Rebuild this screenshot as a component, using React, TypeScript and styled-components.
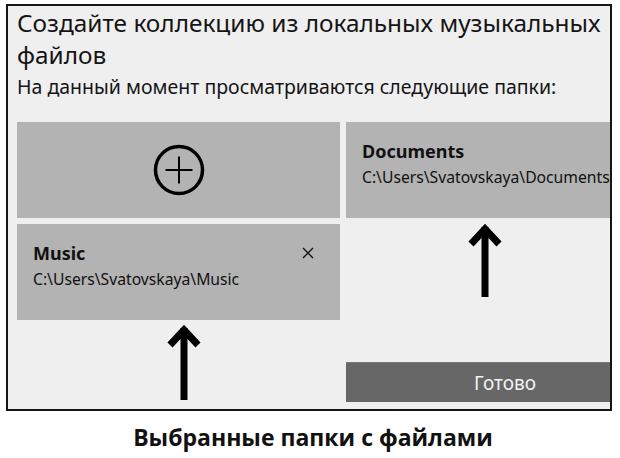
import * as React from "react";
import styled, { createGlobalStyle } from "styled-components";

const GlobalStyle = createGlobalStyle`
  html, body {
    margin: 0;
    padding: 0;
    background: #ffffff;
  }
  body {
    font-family: "Noto Sans", "Open Sans", sans-serif;
    color: #111;
  }
`;

const Page = styled.div`
  width: 620px;
  height: 458px;
  padding: 4px 0 0 6px;
  box-sizing: border-box;
`;

const Dialog = styled.div`
  position: relative;
  width: 606px;
  height: 407px;
  box-sizing: border-box;
  border: 2px solid #151515;
  background: #efefef;
  overflow: hidden;
  display: flex;
  flex-direction: column;
  padding: 1px 0 7px 9px;
`;

const Title = styled.h1`
  margin: 0;
  width: 594px;
  font-size: 24.4px;
  line-height: 32px;
  font-weight: 400;
  color: #151515;
`;

const Subtitle = styled.p`
  margin: 3.5px 0 0;
  font-size: 19.5px;
  line-height: 24px;
  color: #151515;
  white-space: nowrap;
`;

const Grid = styled.div`
  display: grid;
  grid-template-columns: 323px 290px;
  grid-auto-rows: 96px;
  gap: 6px;
  margin-top: 23.5px;
`;

const Tile = styled.div<{ $center?: boolean }>`
  background: #b3b3b3;
  box-sizing: border-box;
  padding: ${(p) => (p.$center ? "0" : "18px 16px 0")};
  display: flex;
  flex-direction: column;
  align-items: ${(p) => (p.$center ? "center" : "stretch")};
  justify-content: ${(p) => (p.$center ? "center" : "flex-start")};
`;

const TileHead = styled.div`
  display: flex;
  align-items: center;
  justify-content: space-between;
  padding-right: 9px;
`;

const FolderName = styled.div`
  font-size: 18px;
  line-height: 22px;
  font-weight: 700;
  color: #111;
`;

const FolderPath = styled.div`
  margin-top: 5px;
  font-size: 15.7px;
  line-height: 20px;
  color: #111;
  white-space: nowrap;
`;

const RemoveButton = styled.button`
  border: none;
  background: none;
  padding: 0;
  width: 14px;
  height: 14px;
  display: flex;
  align-items: center;
  justify-content: center;
  cursor: pointer;
`;

const Footer = styled.div`
  margin-top: auto;
  display: grid;
  grid-template-columns: 323px 290px;
  gap: 6px;
`;

const DoneButton = styled.button`
  grid-column: 2;
  height: 40px;
  border: none;
  border-top: 1px solid #7a7a7a;
  background: #676767;
  color: #f2f2f2;
  font-family: "Noto Sans", "Open Sans", sans-serif;
  font-size: 19px;
  padding: 0 0 0 28px;
  text-align: center;
`;

const Arrow = styled.svg<{ $x: number; $y: number }>`
  position: absolute;
  left: ${(p) => p.$x}px;
  top: ${(p) => p.$y}px;
`;

const Caption = styled.div`
  margin-top: 12px;
  text-align: center;
  font-family: "Open Sans", "Noto Sans", sans-serif;
  font-weight: 700;
  font-size: 23px;
  line-height: 28px;
  color: #111;
`;

function UpArrow({ x, y, length }: { x: number; y: number; length: number }) {
  return (
    <Arrow $x={x} $y={y} width="36" height={length} viewBox={`0 0 36 ${length}`}>
      <path d="M4 23 L18 8 L32 23" fill="none" stroke="#000" strokeWidth="7" strokeLinejoin="miter" />
      <rect x="14.5" y="6" width="7" height={length - 6} fill="#000" />
    </Arrow>
  );
}

function Folder({ name, path, removable }: { name: string; path: string; removable?: boolean }) {
  return (
    <Tile>
      <TileHead>
        <FolderName>{name}</FolderName>
        {removable && (
          <RemoveButton aria-label="Удалить">
            <svg width="12" height="12" viewBox="0 0 12 12">
              <path d="M1 1 L11 11 M11 1 L1 11" stroke="#111" strokeWidth="1.4" />
            </svg>
          </RemoveButton>
        )}
      </TileHead>
      <FolderPath>{path}</FolderPath>
    </Tile>
  );
}

export default function App() {
  return (
    <Page>
      <GlobalStyle />
      <Dialog>
        <Title>Создайте коллекцию из локальных музыкальных файлов</Title>
        <Subtitle>На данный момент просматриваются следующие папки:</Subtitle>
        <Grid>
          <Tile $center>
            <svg width="56" height="56" viewBox="0 0 56 56">
              <circle cx="28" cy="28" r="23.5" fill="none" stroke="#000" strokeWidth="3.5" />
              <path d="M14.5 28 H41.5 M28 14.5 V41.5" stroke="#000" strokeWidth="2" />
            </svg>
          </Tile>
          <Folder name="Documents" path="C:\Users\Svatovskaya\Documents" />
          <Folder name="Music" path="C:\Users\Svatovskaya\Music" removable />
        </Grid>
        <Footer>
          <DoneButton>Готово</DoneButton>
        </Footer>
        <UpArrow x={158} y={316} length={78} />
        <UpArrow x={459} y={215} length={76} />
      </Dialog>
      <Caption>Выбранные папки с файлами</Caption>
    </Page>
  );
}
